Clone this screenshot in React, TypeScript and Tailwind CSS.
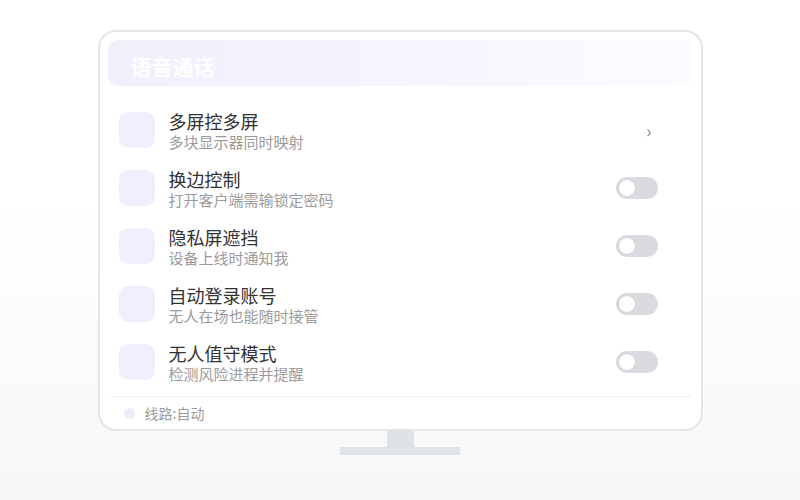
import React from "react";

const rows = [
  { title: "多屏控多屏", sub: "多块显示器同时映射", kind: "chevron" },
  { title: "换边控制", sub: "打开客户端需输锁定密码", kind: "toggle" },
  { title: "隐私屏遮挡", sub: "设备上线时通知我", kind: "toggle" },
  { title: "自动登录账号", sub: "无人在场也能随时接管", kind: "toggle" },
  { title: "无人值守模式", sub: "检测风险进程并提醒", kind: "toggle" },
];

function Toggle() {
  return (
    <div className="w-[42px] h-[22px] rounded-full bg-[#d9dbe1] flex items-center px-[2px]">
      <div className="w-[18px] h-[18px] rounded-full bg-white border border-[#cfd2d8]" />
    </div>
  );
}

export default function App() {
  return (
    <div
      className="w-[800px] h-[500px] bg-gradient-to-b from-white from-40% to-[#f7f7f8] flex flex-col items-center pt-[30px]"
      style={{ fontFamily: '"Noto Sans CJK SC", "Noto Sans", sans-serif' }}
    >
      <div className="w-[605px] h-[401px] border-2 border-[#e3e5e9] rounded-[18px] bg-white px-2 pt-2 flex flex-col">
        <div className="h-[46px] rounded-[10px] bg-gradient-to-r from-[#f2effd] via-[#f6f4fe] to-[#fcfcff] flex items-center pl-[23px] pt-[7px]">
          <span className="text-[21px] font-semibold text-white leading-none">语音通话</span>
        </div>
        <div className="mt-[15px] flex flex-col">
          {rows.map((r) => (
            <div key={r.title} className="h-[58px] flex items-center pl-[11px] pr-[35px]">
              <div className="w-[36px] h-[36px] rounded-[9px] bg-[#f1effd]" />
              <div className="ml-[14px] flex flex-col flex-1 mt-[2px]">
                <span className="text-[18px] leading-[22px] text-[#333333]">{r.title}</span>
                <span className="text-[15px] leading-[20px] text-[#9b9b9b]">{r.sub}</span>
              </div>
              {r.kind === "chevron" ? (
                <span className="text-[18px] leading-none text-[#888888] mr-[6px]">›</span>
              ) : (
                <Toggle />
              )}
            </div>
          ))}
        </div>
        <div className="mt-[5px] mx-[2px] border-t border-[#eeeff2] h-[33px] flex items-center pl-[14px]">
          <div className="w-[11px] h-[11px] rounded-full bg-[#efedfc]" />
          <span className="ml-[10px] text-[14px] text-[#9b9b9b]">线路:自动</span>
        </div>
      </div>
      <div className="w-[27px] h-[16px] bg-[#dfe2e7]" />
      <div className="w-[120px] h-[8px] bg-[#dfe2e7]" />
    </div>
  );
}
